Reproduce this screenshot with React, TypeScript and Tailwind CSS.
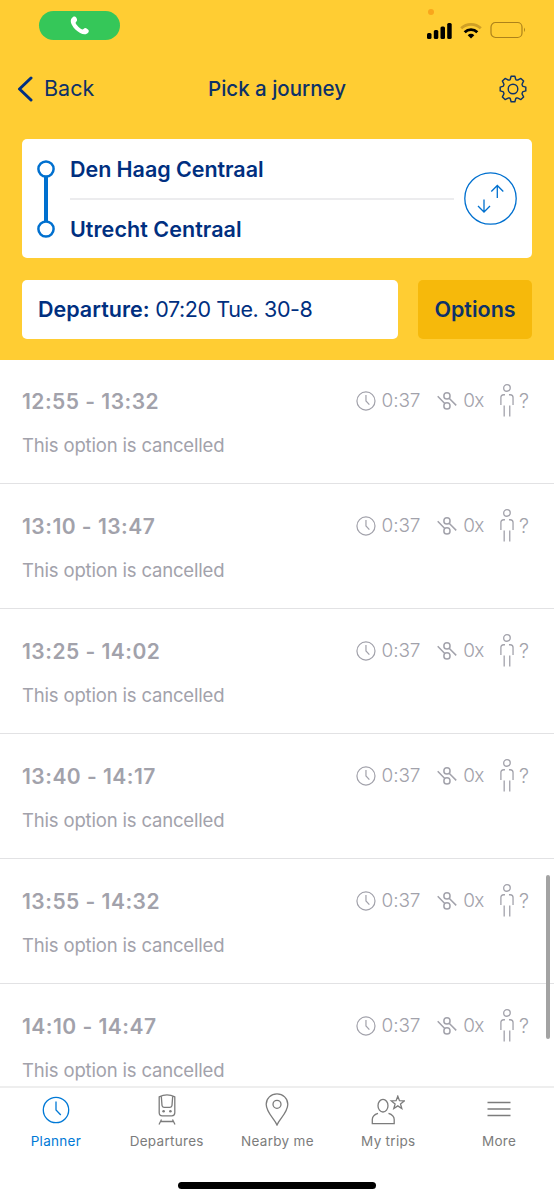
import React, { useState } from 'react';
import clsx from 'clsx';

interface Journey {
  departure: string;
  arrival: string;
  duration: string;
  transfers: number;
}

interface IconProps {
  className?: string;
}

const journeys: Journey[] = [
  { departure: '12:55', arrival: '13:32', duration: '0:37', transfers: 0 },
  { departure: '13:10', arrival: '13:47', duration: '0:37', transfers: 0 },
  { departure: '13:25', arrival: '14:02', duration: '0:37', transfers: 0 },
  { departure: '13:40', arrival: '14:17', duration: '0:37', transfers: 0 },
  { departure: '13:55', arrival: '14:32', duration: '0:37', transfers: 0 },
  { departure: '14:10', arrival: '14:47', duration: '0:37', transfers: 0 },
];

const ClockIcon = ({ className }: IconProps) => (
  <svg viewBox="0 0 28 28" fill="none" stroke="currentColor" className={className}>
    <circle cx="14" cy="14" r="12.7" />
    <path d="M14 5.5V14l4.8 5" />
  </svg>
);

const TransferIcon = () => (
  <svg viewBox="0 0 20 18" fill="none" stroke="currentColor" strokeWidth="1.5" className="h-[18px] w-5">
    <circle cx="10" cy="3.9" r="3.1" />
    <circle cx="10" cy="13.9" r="3.1" />
    <path d="M.7 4.2 7.8 11.6M12.2 6.2l7.1 7.2" />
  </svg>
);

const PersonIcon = () => (
  <svg viewBox="0 0 14 34" fill="none" stroke="currentColor" strokeWidth="1.3" className="h-[34px] w-3.5">
    <circle cx="7" cy="3.9" r="3.3" />
    <path d="M5 10.7H3.8c-1.8 0-2.9 1.1-2.9 2.9V21M9 10.7h1.2c1.8 0 2.9 1.1 2.9 2.9V21M4.2 21.5V32.5M9.8 21.5V32.5" />
  </svg>
);

const TrainIcon = () => (
  <svg viewBox="0 0 18 31" fill="none" stroke="currentColor" strokeWidth="1.3" className="h-[31px] w-[18px]">
    <path d="M1.2 2.8Q5 .8 9 .8T16.8 2.8v16q0 3-3 3H4.2q-3 0-3-3Z" />
    <path d="M3.3 2.2 4 11.4q.2 1.9 2 1.9h6q1.800 0 2-1.900l.7-9.200M3.500 25.500 1 30.500M14.500 25.500l2.500 5M2.500 27.500h13" />
    <circle cx="5.6" cy="17.3" r="1.3" fill="currentColor" stroke="none" />
    <circle cx="12.4" cy="17.3" r="1.3" fill="currentColor" stroke="none" />
  </svg>
);

const PinIcon = () => (
  <svg viewBox="0 0 24 33" fill="none" stroke="currentColor" strokeWidth="1.3" className="h-[33px] w-6">
    <path d="M12 32C9.5 26 1.2 19.5 1.2 11.3a10.8 10.5 0 0 1 21.6 0C22.8 19.5 14.5 26 12 32Z" />
    <circle cx="12" cy="11.3" r="4" />
  </svg>
);

const TripsIcon = () => (
  <svg viewBox="0 0 34 30" fill="none" stroke="currentColor" strokeWidth="1.3" className="h-[30px] w-[34px]">
    <ellipse cx="12" cy="10.7" rx="5" ry="6.3" />
    <path d="M7 18.3c-4 1.2-5.7 3.2-5.7 6.2v4.2h21.9v-4.2c0-3-1.7-5-5.7-6.2" />
    <path d="m26.8 1.2 1.7 4.5 4.8.2-3.8 3 1.3 4.6-4-2.6-4 2.6 1.3-4.6-3.8-3 4.8-.2Z" />
  </svg>
);

const MenuIcon = () => (
  <svg viewBox="0 0 24 16" stroke="currentColor" strokeWidth="1.4" className="-mt-0.5 h-4 w-6">
    <path d="M.5 1.5h23M.5 8h23M.5 14.5h23" />
  </svg>
);

const GearIcon = () => (
  <svg viewBox="0 0 28 28" fill="none" stroke="currentColor" strokeWidth="1.4" strokeLinejoin="round" className="size-7">
    <path d="M12.1 1.2h3.8l.8 3q.3.9 1.2.8.9.2 1.5-.3l2.5-1.3 2.7 2.7-1.3 2.5q-.5.9 0 1.6.1 1 .9 1.2l2.6.7v3.8l-2.6.7q-.8.2-.9 1.2-.5.7 0 1.6l1.3 2.500-2.700 2.700-2.500-1.300q-.6-.5-1.500-.3-.9-.1-1.200.8l-.8 3h-3.800l-.8-3q-.3-.9-1.200-.8-.9-.2-1.500.3l-2.500 1.300-2.700-2.700 1.300-2.500q.5-.9 0-1.600-.1-1-.9-1.200l-2.600-.7v-3.800l2.600-.7q.8-.2.9-1.200.5-.7 0-1.600L3.400 6.100l2.700-2.700 2.500 1.300q.6.5 1.500.3.9.1 1.200-.8Z" />
    <circle cx="14" cy="14" r="4.8" />
  </svg>
);

const tabs = [
  { label: 'Planner', icon: <ClockIcon className="size-7 stroke-[1.3]" /> },
  { label: 'Departures', icon: <TrainIcon /> },
  { label: 'Nearby me', icon: <PinIcon /> },
  { label: 'My trips', icon: <TripsIcon /> },
  { label: 'More', icon: <MenuIcon /> },
];

const StatusBar = () => (
  <div className="flex h-[60px] items-start justify-between pr-7 pl-[39px]">
    <div className="mt-[11px] flex h-[29px] w-[81px] items-center justify-center rounded-full bg-[#35c759]">
      <svg viewBox="0 0 20 20" fill="white" className="size-5">
        <path d="M3 .9c1.5-.9 2.9-.2 3.600 1.300.7 1.400.7 2.600-.4 3.500-.8.8-.7 1.600.2 2.900 1.400 1.900 2.800 3.300 4.700 4.400 1.200.7 1.900.5 2.700-.3 1-1.100 2.200-.7 3.500.2 1.500 1 2 2.100 1 3.500-1.600 2.200-4.700 2.400-8.200.5C6.500 15 3.800 12.400 2 9 .1 5.400.5 2.500 3 .9Z" />
      </svg>
    </div>
    <div className="relative mt-[21px] flex items-center">
      <span className="absolute -top-[12px] left-px size-[6px] rounded-full bg-[#f9a61c]" />
      <svg viewBox="0 0 26 17" className="h-[17px] w-[26px]">
        <rect x="0" y="11" width="4.5" height="6" rx="1.5" />
        <rect x="6.8" y="8" width="4.5" height="9" rx="1.5" />
        <rect x="13.5" y="4.5" width="4.5" height="12.5" rx="1.5" />
        <rect x="20.2" y="1" width="4.5" height="16" rx="1.5" />
      </svg>
      <svg viewBox="0 0 22 17" fill="none" className="ml-[7px] h-[17px] w-[22px]">
        <path d="M1.2 6.3a14 14 0 0 1 19.6 0" stroke="#cf9f25" strokeWidth="2.8" />
        <path d="M4.7 10.2a9 9 0 0 1 12.6 0" stroke="black" strokeWidth="2.9" />
        <path d="M7.7 13.2a4.7 4.7 0 0 1 6.6 0L11 16.5Z" fill="black" />
      </svg>
      <svg viewBox="0 0 36 18" fill="none" className="ml-2 h-[18px] w-9">
        <rect x="1" y="1.5" width="31" height="15" rx="4.5" stroke="#ad821a" strokeWidth="1.2" />
        <path d="M34 6.5q2 2.3 0 4.6Z" fill="#ad821a" />
      </svg>
    </div>
  </div>
);

const JourneyRow = ({ journey }: { journey: Journey }) => (
  <li className="h-[125px] shrink-0 border-b-[1.5px] border-[#e2e2e4] pr-[25px] pl-[22px] text-[#a2a2ab]">
    <div className="flex h-[84px] items-center">
      <span className="w-[334px] pt-0.5 text-[21px] font-semibold tracking-[0.48px]">
        {journey.departure} - {journey.arrival}
      </span>
      <ClockIcon className="ml-px size-5 stroke-[1.7]" />
      <span className="ml-1.5 w-[56px] text-[19px] font-light tracking-[-0.1px]">{journey.duration}</span>
      <TransferIcon />
      <span className="ml-[6px] w-[37px] text-[19px] font-light tracking-[-0.8px]">{journey.transfers}x</span>
      <PersonIcon />
      <span className="ml-[5px] text-[20px] font-light">?</span>
    </div>
    <p className="-mt-3 text-[18.5px] leading-7 tracking-[-0.17px]">This option is cancelled</p>
  </li>
);

const App: React.FC = () => {
  const [activeTab, setActiveTab] = useState('Planner');
  const [stations, setStations] = useState(['Den Haag Centraal', 'Utrecht Centraal']);

  return (
    <div className="flex h-[1200px] w-[554px] flex-col overflow-hidden bg-white font-['Inter',sans-serif]">
      <header className="h-[360px] shrink-0 bg-[#ffcd33] text-[#002f80]">
        <StatusBar />

        {/* Navigation */}
        <div className="grid h-[57px] grid-cols-[1fr_160px_1fr] items-center px-[17px]">
          <button className="flex items-center gap-[11px] text-[21.5px] text-[#0d3168]">
            <svg viewBox="0 0 16 26" fill="none" stroke="#003082" strokeWidth="3" strokeLinecap="round" strokeLinejoin="round" className="h-[26px] w-4">
              <path d="M14 2 2.5 13 14 24" />
            </svg>
            Back
          </button>
          <h1 className="pt-0.5 text-center text-[20.5px] font-medium whitespace-nowrap text-[#0d3168]">Pick a journey</h1>
          <button aria-label="Settings" className="mr-[10px] justify-self-end text-[#0d3168]">
            <GearIcon />
          </button>
        </div>

        {/* Stations */}
        <div className="mx-[22px] mt-[22px] flex h-[119px] items-center rounded-[5px] bg-white">
          <svg viewBox="0 0 18 78" fill="none" stroke="#0070cf" strokeWidth="2.5" className="ml-[15px] h-[78px] w-[18px]">
            <path d="M9 17v44" strokeWidth="4" />
            <circle cx="9" cy="9" r="7.6" />
            <circle cx="9" cy="69" r="7.6" />
          </svg>
          <div className="ml-[15px] w-[384px] text-[21.5px] font-semibold">
            <div className="flex h-[61px] items-center border-b-2 border-[#ececee] pt-[3px] tracking-[-0.05px]">{stations[0]}</div>
            <div className="flex h-[59px] items-center tracking-[0.05px]">{stations[1]}</div>
          </div>
          <button
            aria-label="Swap stations"
            onClick={() => setStations((prev) => [...prev].reverse())}
            className="ml-[10px] size-[53px] text-[#0070cf]"
          >
            <svg viewBox="0 0 53 53" fill="none" stroke="currentColor" strokeWidth="1.3">
              <circle cx="26.5" cy="26.5" r="25.7" />
              <path d="M33.3 26V13.5M27.3 19.5l6-6 6 6M20 27.5V40M14 34l6 6 6-6" />
            </svg>
          </button>
        </div>

        {/* Departure time and options */}
        <div className="mx-[22px] mt-[22px] flex h-[59px] justify-between text-[21.5px]">
          <button className="w-[376px] rounded-[5px] bg-white pl-4 text-left">
            <span className="font-semibold">Departure:</span>
            <span className="tracking-[-0.4px]"> 07:20 Tue. 30-8</span>
          </button>
          <button className="w-[114px] rounded-[5px] bg-[#f6b90b] font-semibold text-[#0d3168]">Options</button>
        </div>
      </header>

      <main className="relative h-[726px] shrink-0 overflow-hidden">
        <ul className="-mt-px flex flex-col">
          {journeys.map((journey) => (
            <JourneyRow key={journey.departure} journey={journey} />
          ))}
        </ul>
        <div className="absolute top-[515px] right-[4px] h-[164px] w-1 rounded-full bg-[#a3a3a3]" />
      </main>

      <nav className="flex grow flex-col border-t-2 border-[#eeeeee]">
        <div className="grid h-[66px] grid-cols-5">
          {tabs.map((tab) => (
            <button
              key={tab.label}
              onClick={() => setActiveTab(tab.label)}
              className={clsx(
                'flex flex-col items-center pl-px text-[13.5px] leading-5 tracking-[0.3px] whitespace-nowrap',
                activeTab === tab.label ? 'text-[#0079d6]' : 'text-[#7c7c7c]'
              )}
            >
              <span className="flex h-[43px] items-center">{tab.icon}</span>
              {tab.label}
            </button>
          ))}
        </div>
        <div className="mx-auto mt-[28px] h-[7px] w-[198px] rounded-full bg-black" />
      </nav>
    </div>
  );
};

export default App;
